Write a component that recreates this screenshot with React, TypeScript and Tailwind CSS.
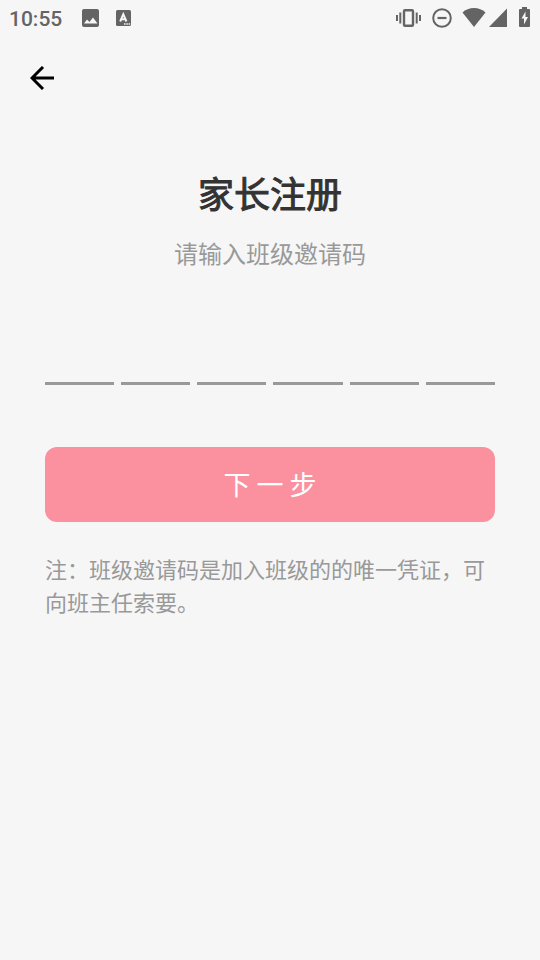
import { useRef } from "react";
import type { ChangeEvent, KeyboardEvent } from "react";

const CODE_LENGTH = 6;

function StatusBar() {
  return (
    <div className="flex h-9 items-center justify-between pl-[9px] pr-[10px] text-[#646464]">
      <div className="flex items-center">
        <span className="w-[73px] pt-0.5 font-['Roboto',sans-serif] text-[21px] leading-9 font-medium">10:55</span>
        <svg className="h-[18px] w-[17px]" viewBox="0 0 17 18" aria-hidden="true">
          <rect width="17" height="18" rx="2" fill="currentColor" />
          <path d="M2 14.500L5 10.500l2.500 2.500 3.500-4.500 4.500 6z" fill="#f6f6f6" />
        </svg>
        <svg className="ml-[17px] h-4 w-[15px]" viewBox="0 0 15 16" aria-hidden="true">
          <rect width="15" height="16" rx="1.500" fill="currentColor" />
          <path d="M4.200 11.500L7.300 4.200l3.100 7.300M5.300 9.200h4" fill="none" stroke="#f6f6f6" strokeWidth="2" />
          <path d="M8 14h1.500M10.300 14h1.500M12.600 14h1.500" stroke="#f6f6f6" strokeWidth="1.500" />
        </svg>
      </div>
      <div className="flex items-center">
        <svg className="h-[18px] w-[26px]" viewBox="0 0 26 18" aria-hidden="true">
          <rect x="8" y="1.200" width="9" height="15.600" rx="1" fill="none" stroke="currentColor" strokeWidth="2.400" />
          <path d="M1 6v6M4.300 3.500v11M20.700 3.500v11M24 6v6" stroke="currentColor" strokeWidth="2" />
        </svg>
        <svg className="ml-[10px] h-5 w-5" viewBox="0 0 20 20" aria-hidden="true">
          <circle cx="10" cy="10" r="8.800" fill="none" stroke="currentColor" strokeWidth="2" />
          <path d="M5.500 10h9" stroke="currentColor" strokeWidth="2.200" />
        </svg>
        <svg className="ml-[10px] h-5 w-6" viewBox="0 0 24 20" aria-hidden="true">
          <path d="M12 19L.5 4.500C3.500 1.500 7.500 0 12 0s8.500 1.500 11.500 4.500z" fill="currentColor" />
        </svg>
        <svg className="ml-[3px] h-5 w-[18px]" viewBox="0 0 18 20" aria-hidden="true">
          <path d="M0 19L18 .5V19z" fill="currentColor" />
        </svg>
        <svg className="ml-3 h-[22px] w-[11px]" viewBox="0 0 11 22" aria-hidden="true">
          <path d="M3 0h5v2h2q1 0 1 1v16q0 1-1 1H1q-1 0-1-1V3q0-1 1-1h2z" fill="currentColor" />
          <path d="M6.500 4.500L2.500 11.500H5V17.500L9 10H6.500z" fill="#f6f6f6" />
        </svg>
      </div>
    </div>
  );
}

function CodeInput() {
  const cells = useRef<(HTMLInputElement | null)[]>([]);

  const handleChange = (index: number) => (event: ChangeEvent<HTMLInputElement>) => {
    if (event.target.value) cells.current[index + 1]?.focus();
  };

  const handleKeyDown = (index: number) => (event: KeyboardEvent<HTMLInputElement>) => {
    if (event.key === "Backspace" && !event.currentTarget.value) cells.current[index - 1]?.focus();
  };

  return (
    <div className="mt-12 grid grid-cols-6 gap-[7px]" role="group" aria-label="班级邀请码">
      {Array.from({ length: CODE_LENGTH }, (_, index) => (
        <input
          key={index}
          ref={(node) => {
            cells.current[index] = node;
          }}
          type="text"
          maxLength={1}
          aria-label={`邀请码第${index + 1}位`}
          onChange={handleChange(index)}
          onKeyDown={handleKeyDown(index)}
          className="h-[66px] w-full min-w-0 border-b-3 border-[#999999] bg-transparent text-center text-[36px] text-[#333333] outline-none"
        />
      ))}
    </div>
  );
}

export default function App() {
  return (
    <div className="min-h-screen bg-[#f6f6f6] font-['Noto_Sans_CJK_SC',sans-serif]">
      <StatusBar />
      <header className="flex h-[84px] items-center px-[30px]">
        <button type="button" aria-label="返回" className="block text-black">
          <svg className="h-6 w-6" viewBox="0 0 24 24" fill="none" stroke="currentColor" strokeWidth="3" aria-hidden="true">
            <path d="M24 12H2M13 1L2 12l11 11" />
          </svg>
        </button>
      </header>
      <main className="px-[45px] pt-[45px]">
        <h1 className="text-center text-[36px] leading-[54px] font-normal text-[#333333] [-webkit-text-stroke:1px_#333333]">
          家长注册
        </h1>
        <p className="mt-4 text-center text-[24px] leading-9 text-[#999999]">请输入班级邀请码</p>
        <form onSubmit={(event) => event.preventDefault()}>
          <CodeInput />
          <button
            type="submit"
            className="mt-[62px] block h-[75px] w-full rounded-xl bg-[#fb919f] text-[27px] text-white"
          >
            下 一 步
          </button>
        </form>
        <p className="mt-[30px] text-[22px] leading-[33px] text-[#999999]">
          注：班级邀请码是加入班级的的唯一凭证，可向班主任索要。
        </p>
      </main>
    </div>
  );
}
